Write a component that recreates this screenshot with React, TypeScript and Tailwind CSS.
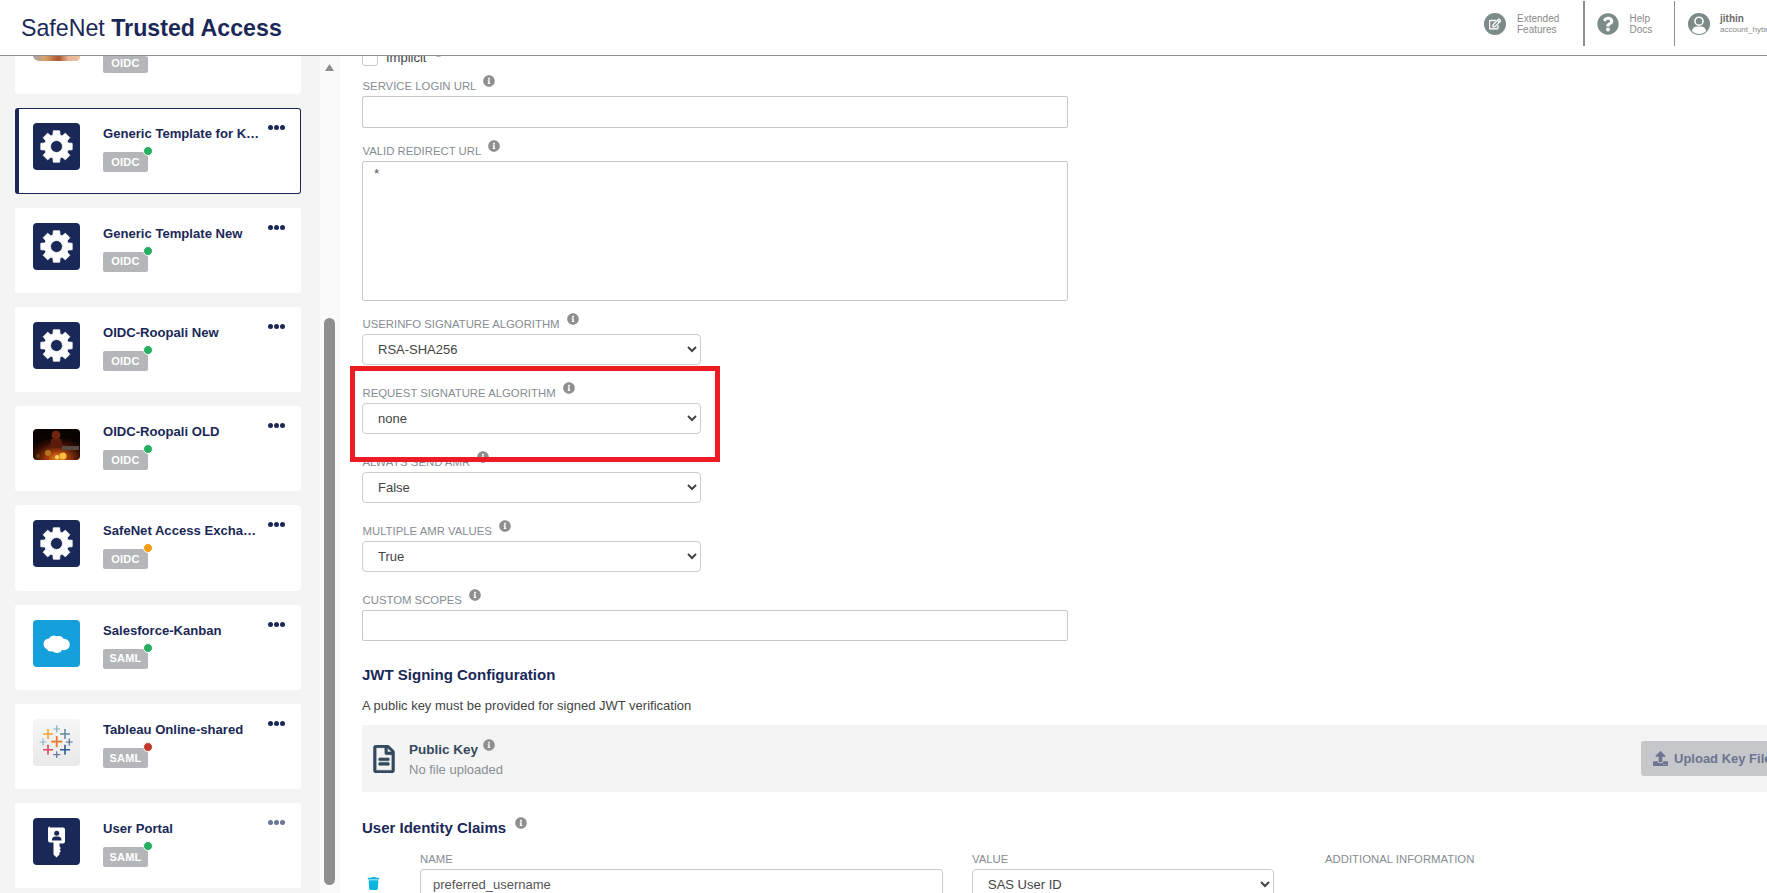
import React from "react";
import { FaInfoCircle, FaQuestionCircle, FaRegEdit, FaRegFileAlt, FaTrash, FaUpload } from "react-icons/fa";

// 8 tooth gear with a round hole, drawn for a 47x47 box
const gearPath = (() => {
  const cx = 23.5;
  const cy = 23.5;
  const pts: string[] = [];
  for (let i = 0; i < 8; i++) {
    const a = (i * Math.PI) / 4 - Math.PI / 2;
    const p = (r: number, d: number) =>
      `${(cx + r * Math.cos(a + d)).toFixed(2)} ${(cy + r * Math.sin(a + d)).toFixed(2)}`;
    pts.push(p(12, -0.3), p(16, -0.2), p(16, 0.2), p(12, 0.3));
  }
  return `M${pts.join("L")}Z M${cx + 6} ${cy} a6 6 0 1 0 -12 0 a6 6 0 1 0 12 0Z`;
})();

function GearIcon() {
  return (
    <div className="h-[47px] w-[47px] shrink-0 rounded-[4px] bg-[#1a2857]">
      <svg viewBox="0 0 47 47" className="h-[47px] w-[47px]">
        <path d={gearPath} fill="#fff" fillRule="evenodd" stroke="#fff" strokeWidth="0.8" strokeLinejoin="round" />
      </svg>
    </div>
  );
}

function PhotoIcon() {
  return (
    <div className="flex h-[47px] w-[47px] shrink-0 items-center">
      <svg viewBox="0 0 47 26" className="h-[26px] w-[47px]">
        <defs>
          <linearGradient id="skin" x1="0" x2="1" y1="0" y2="0">
            <stop offset="0" stopColor="#9fa3ad" />
            <stop offset="0.25" stopColor="#d8a468" />
            <stop offset="0.55" stopColor="#a9552f" />
            <stop offset="0.75" stopColor="#e9b493" />
            <stop offset="1" stopColor="#eec0a0" />
          </linearGradient>
        </defs>
        <path d="M0 0h47v22a4 4 0 0 1-4 4H6a6 6 0 0 1-6-6z" fill="url(#skin)" />
      </svg>
    </div>
  );
}

function FireIcon() {
  return (
    <div className="flex h-[47px] w-[47px] shrink-0 items-center">
      <svg viewBox="0 0 47 31" className="h-[31px] w-[47px] rounded-[4px]">
        <defs>
          <radialGradient id="flame" cx="0.52" cy="0.95" r="0.7">
            <stop offset="0" stopColor="#f0901f" />
            <stop offset="0.3" stopColor="#a53f0c" />
            <stop offset="0.7" stopColor="#350e04" />
            <stop offset="1" stopColor="#0a0201" />
          </radialGradient>
        </defs>
        <rect width="47" height="31" fill="url(#flame)" />
        <circle cx="23" cy="6" r="4.500" fill="#6e2410" />
        <path d="M18 10h10l2 9h-13z" fill="#5c1c0c" />
        <circle cx="15" cy="24" r="3" fill="#b5741c" />
        <circle cx="5" cy="27" r="2" fill="#6a3a10" />
        <rect x="29" y="17" width="17" height="4" fill="#5a4a44" />
        <circle cx="30" cy="27" r="3.500" fill="#ffbb3f" />
        <circle cx="24" cy="28" r="2" fill="#ffd76a" />
      </svg>
    </div>
  );
}

function SalesforceIcon() {
  return (
    <div className="h-[47px] w-[47px] shrink-0 rounded-[4px] bg-[#159fdb]">
      <svg viewBox="0 0 47 47" className="h-[47px] w-[47px]" fill="#fff">
        <circle cx="16" cy="24" r="5.5" />
        <circle cx="21" cy="21" r="5.5" />
        <circle cx="26" cy="21" r="5" />
        <circle cx="31" cy="24.5" r="5.8" />
        <circle cx="24" cy="27" r="6" />
        <circle cx="18" cy="27" r="4.5" />
      </svg>
    </div>
  );
}

const tableauMarks = [
  { x: 15, y: 15, s: 5, w: 1.6, c: "#f2a33a" },
  { x: 23.7, y: 10, s: 3.4, w: 1.2, c: "#7fb0bf" },
  { x: 32, y: 15, s: 5, w: 1.6, c: "#5f8fa8" },
  { x: 10, y: 23, s: 3.4, w: 1.2, c: "#8fb8c4" },
  { x: 23.7, y: 22.7, s: 5.6, w: 1.8, c: "#e8762b" },
  { x: 36.3, y: 23, s: 3.4, w: 1.2, c: "#5d6d9b" },
  { x: 15, y: 30.7, s: 5, w: 1.6, c: "#dd4a5a" },
  { x: 23.7, y: 35.7, s: 3.4, w: 1.2, c: "#6b6fa0" },
  { x: 32, y: 30.7, s: 5, w: 1.6, c: "#2f5a92" },
];

function TableauIcon() {
  return (
    <div className="h-[47px] w-[47px] shrink-0 rounded-[4px] bg-gradient-to-b from-[#f6f6f6] to-[#e9e9e9]">
      <svg viewBox="0 0 47 47" className="h-[47px] w-[47px]">
        {tableauMarks.map((m) => (
          <path
            key={`${m.x}-${m.y}`}
            d={`M${m.x - m.s} ${m.y}h${m.s * 2}M${m.x} ${m.y - m.s}v${m.s * 2}`}
            stroke={m.c}
            strokeWidth={m.w}
          />
        ))}
      </svg>
    </div>
  );
}

function KeyIcon() {
  return (
    <div className="h-[47px] w-[47px] shrink-0 rounded-[4px] bg-[#1a2857]">
      <svg viewBox="0 0 47 47" className="h-[47px] w-[47px]">
        <path
          d="M17 9.5h13a2 2 0 0 1 2 2v12a2 2 0 0 1-2 2h-3.5v3l1.5 1.5-1.5 1.5 1.5 1.500-1.5 1.500v2l-3 3-3-3v-12h-3.5a2 2 0 0 1-2-2v-12a2 2 0 0 1 2-2z"
          fill="#fff"
        />
        <circle cx="23.7" cy="15.2" r="2.5" fill="#1a2857" />
        <path d="M19 22.5v-1.5a3 3 0 0 1 3-2.5h3.4a3 3 0 0 1 3 2.5v1.5z" fill="#1a2857" />
      </svg>
    </div>
  );
}

interface AppCard {
  name: string;
  kind: string;
  status: string;
  icon: React.ReactNode;
  selected?: boolean;
  faded?: boolean;
}

const cards: AppCard[] = [
  { name: "", kind: "OIDC", status: "bg-[#27ae60]", icon: <PhotoIcon /> },
  { name: "Generic Template for Kanban", kind: "OIDC", status: "bg-[#27ae60]", icon: <GearIcon />, selected: true },
  { name: "Generic Template New", kind: "OIDC", status: "bg-[#27ae60]", icon: <GearIcon /> },
  { name: "OIDC-Roopali New", kind: "OIDC", status: "bg-[#27ae60]", icon: <GearIcon /> },
  { name: "OIDC-Roopali OLD", kind: "OIDC", status: "bg-[#27ae60]", icon: <FireIcon /> },
  { name: "SafeNet Access Exchange", kind: "OIDC", status: "bg-[#f39c12]", icon: <GearIcon /> },
  { name: "Salesforce-Kanban", kind: "SAML", status: "bg-[#27ae60]", icon: <SalesforceIcon /> },
  { name: "Tableau Online-shared", kind: "SAML", status: "bg-[#c0392b]", icon: <TableauIcon /> },
  { name: "User Portal", kind: "SAML", status: "bg-[#27ae60]", icon: <KeyIcon />, faded: true },
];

function Card({ card }: { card: AppCard }) {
  return (
    <div
      className={`flex h-[85.25px] w-[286px] shrink-0 rounded-[3px] border border-l-4 bg-white pl-[14px] pt-[14px] ${
        card.selected ? "border-[#1a2857]" : "border-transparent"
      }`}
    >
      {card.icon}
      <div className="ml-[23px] w-[157px] shrink-0 pt-[3px]">
        <div className="h-[16px] truncate text-[13.1px] font-bold leading-[16px] text-[#1a2857]">{card.name}</div>
        <div className="relative mt-[10px] flex h-[20px] w-[45px] items-center justify-center rounded-[2px] bg-[#b4b6ba] text-[11px] font-bold tracking-[0.2px] text-white">
          {card.kind}
          <span className={`absolute right-[-5px] top-[-6px] h-[10px] w-[10px] rounded-full border border-white ${card.status}`} />
        </div>
      </div>
      <div className="ml-[8px] mt-[2px] flex h-[5px] gap-[1.2px]">
        {[0, 1, 2].map((d) => (
          <span key={d} className={`h-[5px] w-[5px] rounded-full ${card.faded ? "bg-[#6b7499]" : "bg-[#1a2857]"}`} />
        ))}
      </div>
    </div>
  );
}

function Label({ text }: { text: string }) {
  return (
    <div className="flex h-[19px] items-center gap-[7px] pl-[0.5px] pt-[1px] text-[11.35px] text-[#868c92]">
      <span>{text}</span>
      <FaInfoCircle className="mb-[12px] text-[12px] text-[#8f8f8f]" />
    </div>
  );
}

function SelectField({ label, value, className }: { label: string; value: string; className: string }) {
  return (
    <div className={className}>
      <Label text={label} />
      <select
        defaultValue={value}
        className="block h-[31px] w-[339px] rounded-[4px] border border-[#cccccc] bg-white pl-[11px] text-[13px] text-[#444]"
      >
        <option>{value}</option>
      </select>
    </div>
  );
}

function HeaderItem({ icon, lines, width }: { icon: React.ReactNode; lines: string[]; width: string }) {
  return (
    <div className={`flex shrink-0 items-center gap-[11px] pl-[12px] ${width}`}>
      {icon}
      <div className="text-[10px] leading-[11px] text-[#8a8a8a]">
        {lines.map((l) => (
          <div key={l}>{l}</div>
        ))}
      </div>
    </div>
  );
}

export default function App() {
  return (
    <div className="flex h-screen w-screen flex-col overflow-hidden bg-white font-['Liberation_Sans',Arial,sans-serif]">
      <header className="flex h-[56px] shrink-0 items-center justify-between border-b border-[#8a8f8f] bg-white pl-[21px]">
        <div className="text-[23.2px] leading-[26px] text-[#1a2857]">
          SafeNet <span className="font-bold">Trusted Access</span>
        </div>
        <div className="flex h-[45px] w-[295px] shrink-0 items-center self-start pt-[2px]">
          <HeaderItem
            width="w-[111px]"
            lines={["Extended", "Features"]}
            icon={
              <span className="flex h-[22px] w-[22px] items-center justify-center rounded-full bg-[#7d8a8a]">
                <FaRegEdit className="text-[12px] text-white" stroke="currentColor" strokeWidth={24} />
              </span>
            }
          />
          <div className="h-[45px] w-[1.5px] shrink-0 bg-[#8a8f8f]" />
          <HeaderItem
            width="w-[89px]"
            lines={["Help", "Docs"]}
            icon={<FaQuestionCircle className="text-[22px] text-[#7d8a8a]" />}
          />
          <div className="h-[45px] w-[1.5px] shrink-0 bg-[#8a8f8f]" />
          <div className="flex shrink-0 items-center gap-[10px] pl-[13px]">
            <svg viewBox="0 0 22 22" className="h-[22px] w-[22px] shrink-0">
              <circle cx="11" cy="11" r="11" fill="#7d8a8a" />
              <circle cx="11" cy="8.2" r="4" fill="none" stroke="#fff" strokeWidth="1.6" />
              <path d="M3.8 18c.6-3.2 3-4.6 4.8-4.6h4.8c1.8 0 4.2 1.4 4.8 4.6-2 2-4.500 3-7.200 3s-5.200-1-7.200-3z" fill="#fff" />
            </svg>
            <div className="whitespace-nowrap">
              <div className="text-[10px] font-bold leading-[12px] text-[#6b6b6b]">jithin</div>
              <div className="text-[8px] leading-[10px] text-[#8a8a8a]">account_hybrid</div>
            </div>
          </div>
        </div>
      </header>

      <div className="flex min-h-0 flex-1">
        <aside className="w-[320px] shrink-0 overflow-hidden bg-[#f4f4f4] pl-[15px]">
          <div className="mt-[-47px] flex flex-col gap-[14px]">
            {cards.map((c) => (
              <Card key={c.name + c.kind + c.status} card={c} />
            ))}
          </div>
        </aside>

        <div className="flex w-[20px] shrink-0 flex-col items-start bg-[#fafafa] pl-[4px]">
          <svg viewBox="0 0 9 7" className="ml-[1px] mt-[8px] h-[7px] w-[9px] shrink-0">
            <path d="M4.500 0L9 7H0z" fill="#8e8e8e" />
          </svg>
          <div className="mt-[247px] h-[567px] w-[11px] shrink-0 rounded-full bg-[#8e8e8e]" />
        </div>

        <main className="min-w-0 flex-1 overflow-hidden pl-[22px] text-[#444]">
          <div className="mt-[-6px] flex h-[16px] items-center">
            <span className="h-[16px] w-[16px] rounded-[3px] border border-[#c8c8c8] bg-white" />
            <span className="ml-[8px] text-[13px] leading-[16px] text-[#444]">Implicit</span>
            <FaInfoCircle className="mb-[14px] ml-[7px] text-[11px] text-[#8f8f8f]" />
          </div>

          <div className="mt-[11px]">
            <Label text="SERVICE LOGIN URL" />
            <input className="block h-[32px] w-[706px] rounded-[2px] border border-[#c8c8c8] bg-white" />
          </div>

          <div className="mt-[14px]">
            <Label text="VALID REDIRECT URL" />
            <textarea
              defaultValue="*"
              className="block h-[140px] w-[706px] resize-none rounded-[2px] border border-[#c8c8c8] bg-white px-[11px] py-[2px] text-[13px] text-[#555]"
            />
          </div>

          <SelectField className="mt-[14px]" label="USERINFO SIGNATURE ALGORITHM" value="RSA-SHA256" />

          <div className="relative mt-[19px]">
            <Label text="REQUEST SIGNATURE ALGORITHM" />
            <select
              defaultValue="none"
              className="block h-[31px] w-[339px] rounded-[4px] border border-[#cccccc] bg-white pl-[11px] text-[13px] text-[#444]"
            >
              <option>none</option>
            </select>
            <div className="absolute left-[-12px] top-[-18px] z-10 h-[96px] w-[370px] border-[5px] border-[#ed1c24]" />
          </div>

          <SelectField className="mt-[19px]" label="ALWAYS SEND AMR" value="False" />
          <SelectField className="mt-[19px]" label="MULTIPLE AMR VALUES" value="True" />

          <div className="mt-[19px]">
            <Label text="CUSTOM SCOPES" />
            <input className="block h-[31px] w-[706px] rounded-[2px] border border-[#c8c8c8] bg-white" />
          </div>

          <h3 className="mt-[24px] h-[20px] text-[15px] font-bold leading-[20px] text-[#1a2857]">JWT Signing Configuration</h3>
          <p className="mt-[11px] h-[20px] text-[13px] leading-[20px] text-[#444]">
            A public key must be provided for signed JWT verification
          </p>

          <div className="mt-[9px] flex h-[67px] w-[1444px] items-center justify-between bg-[#f4f4f4] pl-[8px]">
            <div className="flex items-center gap-[11px]">
              <FaRegFileAlt className="text-[28px] text-[#34495e]" stroke="currentColor" strokeWidth={10} />
              <div>
                <div className="flex items-center gap-[5px] text-[13.5px] font-bold leading-[18px] text-[#34495e]">
                  Public Key
                  <FaInfoCircle className="mb-[10px] text-[12px] text-[#8f8f8f]" />
                </div>
                <div className="text-[13px] leading-[18px] text-[#8a8f94]">No file uploaded</div>
              </div>
            </div>
            <button className="mr-[15px] flex h-[35px] w-[150px] shrink-0 items-center gap-[6px] whitespace-nowrap rounded-[3px] bg-[#c5c7cb] pl-[12px] text-[13px] font-bold text-[#6d7390]">
              <FaUpload className="text-[15px]" />
              Upload Key File
            </button>
          </div>

          <div className="mt-[26px] flex h-[20px] items-center gap-[9px] pt-[1px] text-[15px] font-bold text-[#1a2857]">
            User Identity Claims
            <FaInfoCircle className="mb-[12px] text-[12px] font-normal text-[#8f8f8f]" />
          </div>

          <div className="mt-[12px] flex">
            <div className="flex w-[58px] shrink-0 items-start pl-[5px] pt-[27px]">
              <FaTrash className="text-[13px] text-[#0cb5dd]" />
            </div>
            <div className="w-[523px] shrink-0">
              <div className="h-[19px] text-[11.35px] leading-[18px] text-[#868c92]">NAME</div>
              <input
                defaultValue="preferred_username"
                className="block h-[30px] w-full rounded-[3px] border border-[#c8c8c8] bg-white px-[12px] text-[13px] text-[#555]"
              />
            </div>
            <div className="ml-[29px] w-[302px] shrink-0">
              <div className="h-[19px] text-[11.35px] leading-[18px] text-[#868c92]">VALUE</div>
              <select
                defaultValue="SAS User ID"
                className="block h-[30px] w-full rounded-[4px] border border-[#cccccc] bg-white pl-[11px] text-[13px] text-[#444]"
              >
                <option>SAS User ID</option>
              </select>
            </div>
            <div className="ml-[51px] whitespace-nowrap text-[11.35px] leading-[18px] text-[#868c92]">ADDITIONAL INFORMATION</div>
          </div>
        </main>
      </div>
    </div>
  );
}
